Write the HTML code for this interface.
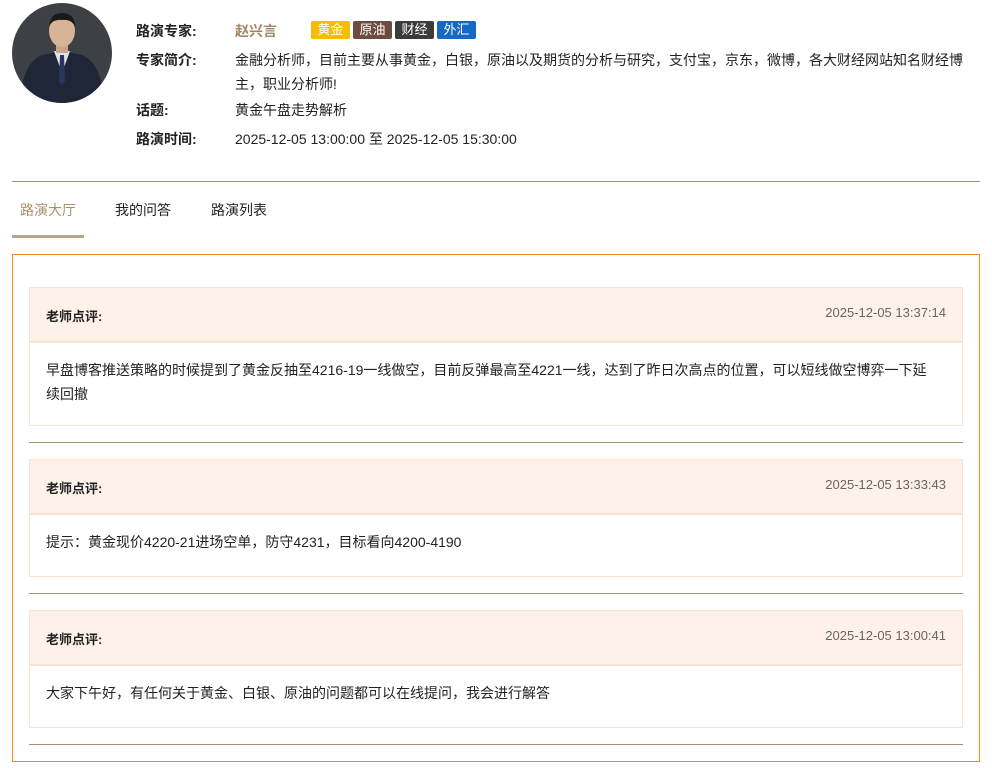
<!DOCTYPE html>
<html><head><meta charset="utf-8"><style>
*{margin:0;padding:0;box-sizing:border-box}
body{width:992px;height:768px;background:#fff;font-family:"Liberation Sans","Noto Sans CJK SC",sans-serif;font-size:14px;color:#222;position:relative;overflow:hidden}
.abs{position:absolute}
.lbl{left:136px;font-weight:bold;color:#222}
.val{left:235px;line-height:24px}
.tag{top:21px;height:18px;width:39px;color:#fff;font-size:13px;text-align:center;line-height:18px;border-radius:2px}
.card{left:29px;width:934px;border:1px solid #fde3cc}
.hd{height:55px;background:#fef1e9;border-bottom:2px solid #fde3cc;position:relative}
.hd b{position:absolute;left:16px;top:18px;font-size:13px}
.hd span{position:absolute;right:16px;top:17px;font-size:13px;color:#666}
.bd{padding:17px 30px 17px 16px;line-height:24px;font-size:14px}
.sep{left:29px;width:934px;height:1px;background:#a8926a}
</style></head><body>
<svg class="abs" style="left:12px;top:3px" width="100" height="100" viewBox="0 0 100 100">
<defs><clipPath id="c"><circle cx="50" cy="50" r="50"/></clipPath></defs>
<g clip-path="url(#c)">
<rect width="100" height="100" fill="#3d4044"/>
<path d="M8 100 Q10 60 30 52 L50 48 L70 52 Q90 60 92 100Z" fill="#1e2638"/>
<path d="M42 48 L50 70 L58 48Z" fill="#dfe4ea"/>
<path d="M48 52 L52 52 L53 78 L50 82 L47 78Z" fill="#2a3560"/>
<rect x="44" y="38" width="12" height="12" fill="#c9a58a"/>
<ellipse cx="50" cy="28" rx="13" ry="16" fill="#d7b398"/>
<path d="M37 24 Q38 10 50 10 Q63 10 63 24 Q60 16 50 17 Q40 16 37 24Z" fill="#1a1a1a"/>
</g></svg>
<div class="abs lbl" style="top:21px">路演专家:</div>
<div class="abs val" style="top:19px;color:#a08865;font-weight:bold">赵兴言</div>
<div class="abs tag" style="left:311px;background:#f6bd00">黄金</div>
<div class="abs tag" style="left:353px;background:#6d4c3f">原油</div>
<div class="abs tag" style="left:395px;background:#3b3b3b">财经</div>
<div class="abs tag" style="left:437px;background:#1767c4">外汇</div>
<div class="abs lbl" style="top:50px">专家简介:</div>
<div class="abs val" style="top:48px;width:735px">金融分析师，目前主要从事黄金，白银，原油以及期货的分析与研究，支付宝，京东，微博，各大财经网站知名财经博主，职业分析师!</div>
<div class="abs lbl" style="top:100px">话题:</div>
<div class="abs val" style="top:98px">黄金午盘走势解析</div>
<div class="abs lbl" style="top:129px">路演时间:</div>
<div class="abs val" style="top:127px">2025-12-05 13:00:00 至 2025-12-05 15:30:00</div>
<div class="abs" style="left:12px;top:181px;width:968px;height:1px;background:#a8926a"></div>
<div class="abs" style="left:20px;top:200px;color:#a8926a">路演大厅</div>
<div class="abs" style="left:115px;top:200px">我的问答</div>
<div class="abs" style="left:211px;top:200px">路演列表</div>
<div class="abs" style="left:12px;top:235px;width:72px;height:3px;background:#b5a78f"></div>
<div class="abs" style="left:12px;top:254px;width:968px;height:508px;border:1px solid #f08a1c"></div>
<div class="abs card" style="top:287px;height:139px"><div class="hd"><b>老师点评:</b><span>2025-12-05 13:37:14</span></div><div class="bd" style="padding-top:15px">早盘博客推送策略的时候提到了黄金反抽至4216-19一线做空，目前反弹最高至4221一线，达到了昨日次高点的位置，可以短线做空博弈一下延续回撤</div></div>
<div class="abs sep" style="top:442px"></div>
<div class="abs card" style="top:459px;height:118px"><div class="hd"><b>老师点评:</b><span>2025-12-05 13:33:43</span></div><div class="bd" style="padding-top:15px">提示：黄金现价4220-21进场空单，防守4231，目标看向4200-4190</div></div>
<div class="abs sep" style="top:593px"></div>
<div class="abs card" style="top:610px;height:118px"><div class="hd"><b>老师点评:</b><span>2025-12-05 13:00:41</span></div><div class="bd" style="padding-top:15px">大家下午好，有任何关于黄金、白银、原油的问题都可以在线提问，我会进行解答</div></div>
<div class="abs sep" style="top:744px"></div>
</body></html>
